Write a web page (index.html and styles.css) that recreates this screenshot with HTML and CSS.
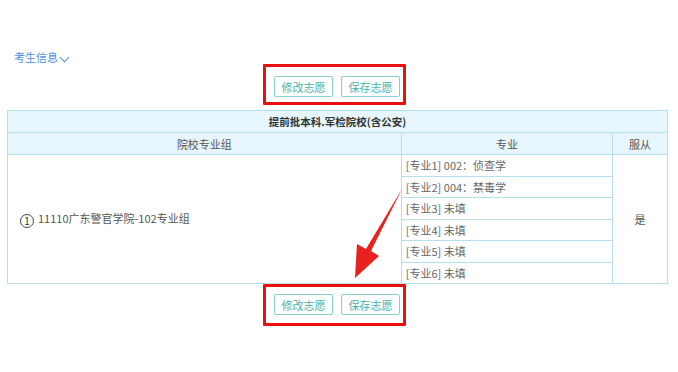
FILE: index.html
```html
<!DOCTYPE html>
<html>
<head>
    <meta charset="utf-8">
    <title>志愿填报</title>
    <link rel="stylesheet" href="styles.css">
</head>
<body>

    <div class="stu-info">考生信息<span class="caret"></span></div>

    <!-- top actions -->
    <div class="actions">
        <div class="mark top">
            <button class="btn">修改志愿</button>
            <button class="btn">保存志愿</button>
        </div>
    </div>

    <table class="wish">
        <tr class="title">
            <th colspan="3">提前批本科.军检院校(含公安)</th>
        </tr>
        <tr class="head">
            <th class="col-group">院校专业组</th>
            <th class="col-major">专业</th>
            <th class="col-obey">服从</th>
        </tr>
        <tr>
            <td class="group" rowspan="6"><span class="num">1</span>11110广东警官学院-102专业组</td>
            <td class="major">[专业1] 002：侦查学</td>
            <td class="obey" rowspan="6">是</td>
        </tr>
        <tr><td class="major">[专业2] 004：禁毒学</td></tr>
        <tr><td class="major">[专业3] 未填</td></tr>
        <tr><td class="major">[专业4] 未填</td></tr>
        <tr><td class="major">[专业5] 未填</td></tr>
        <tr><td class="major">[专业6] 未填</td></tr>
    </table>

    <!-- bottom actions -->
    <div class="actions">
        <div class="mark bottom">
            <button class="btn">修改志愿</button>
            <button class="btn">保存志愿</button>
        </div>
    </div>

    <!-- annotation arrow -->
    <svg class="arrow" width="678" height="372" viewBox="0 0 678 372">
        <polygon points="402,189 371,251 379,256 355,278 357,244 366,249" fill="#e8201e"/>
    </svg>

</body>
</html>
```

FILE: styles.css
```css
body {
    margin: 0;
    background: #fff;
    font-family: "Noto Sans CJK SC", "Noto Sans", sans-serif;
    font-size: 11px;
    color: #555;
    position: relative;
}
.stu-info {
    padding: 51px 0 0 14px;
    height: 13px;
    line-height: 13px;
    color: #4a8fe0;
    font-size: 11px;
}
.caret {
    display: inline-block;
    width: 6px;
    height: 6px;
    border-right: 1.3px solid #4a8fe0;
    border-bottom: 1.3px solid #4a8fe0;
    transform: rotate(45deg);
    margin: 0 0 3px 3px;
    vertical-align: middle;
}
.actions {
    display: flex;
    justify-content: center;
    padding-right: 9px;
}
.mark {
    display: flex;
    gap: 8px;
    border: 3px solid #ea1010;
    border-radius: 1px;
    padding: 9px 3px 5px 8px;
}
.mark.top {
    margin-bottom: 5px;
}
.mark.bottom {
    padding-top: 7px;
    padding-bottom: 8px;
}
.btn {
    width: 59px;
    height: 21px;
    padding: 0;
    background: #fff;
    border: 1px solid #86d1cd;
    border-radius: 2px;
    color: #3fb4ad;
    font-family: inherit;
    font-size: 11px;
}
.wish {
    border-collapse: collapse;
    margin: 0 10px 0 7px;
    width: 661px;
    border: 1.5px solid #a6dce6;
}
.wish th, .wish td {
    border: 1px solid #b3e0ea;
    padding: 0;
}
.title th {
    height: 21px;
    background: #e6f6fc;
    color: #333;
    font-size: 10.5px;
    font-weight: bold;
    text-align: center;
}
.head th {
    height: 21px;
    background: #e6f6fc;
    font-weight: normal;
    color: #555;
}
.col-group { width: 394px; }
.col-major { width: 211px; }
.col-obey { width: 54px; }
.group {
    padding-left: 12px !important;
    color: #555;
}
.num {
    display: inline-block;
    width: 12px;
    height: 12px;
    line-height: 12px;
    border: 1px solid #444;
    border-radius: 50%;
    text-align: center;
    font-size: 10px;
    color: #333;
    margin-right: 4px;
    vertical-align: middle;
}
.major {
    height: 20.5px;
    padding-left: 4px !important;
    color: #666;
}
.obey {
    text-align: center;
    color: #555;
}
.arrow {
    position: absolute;
    left: 0;
    top: 0;
    pointer-events: none;
}
```
